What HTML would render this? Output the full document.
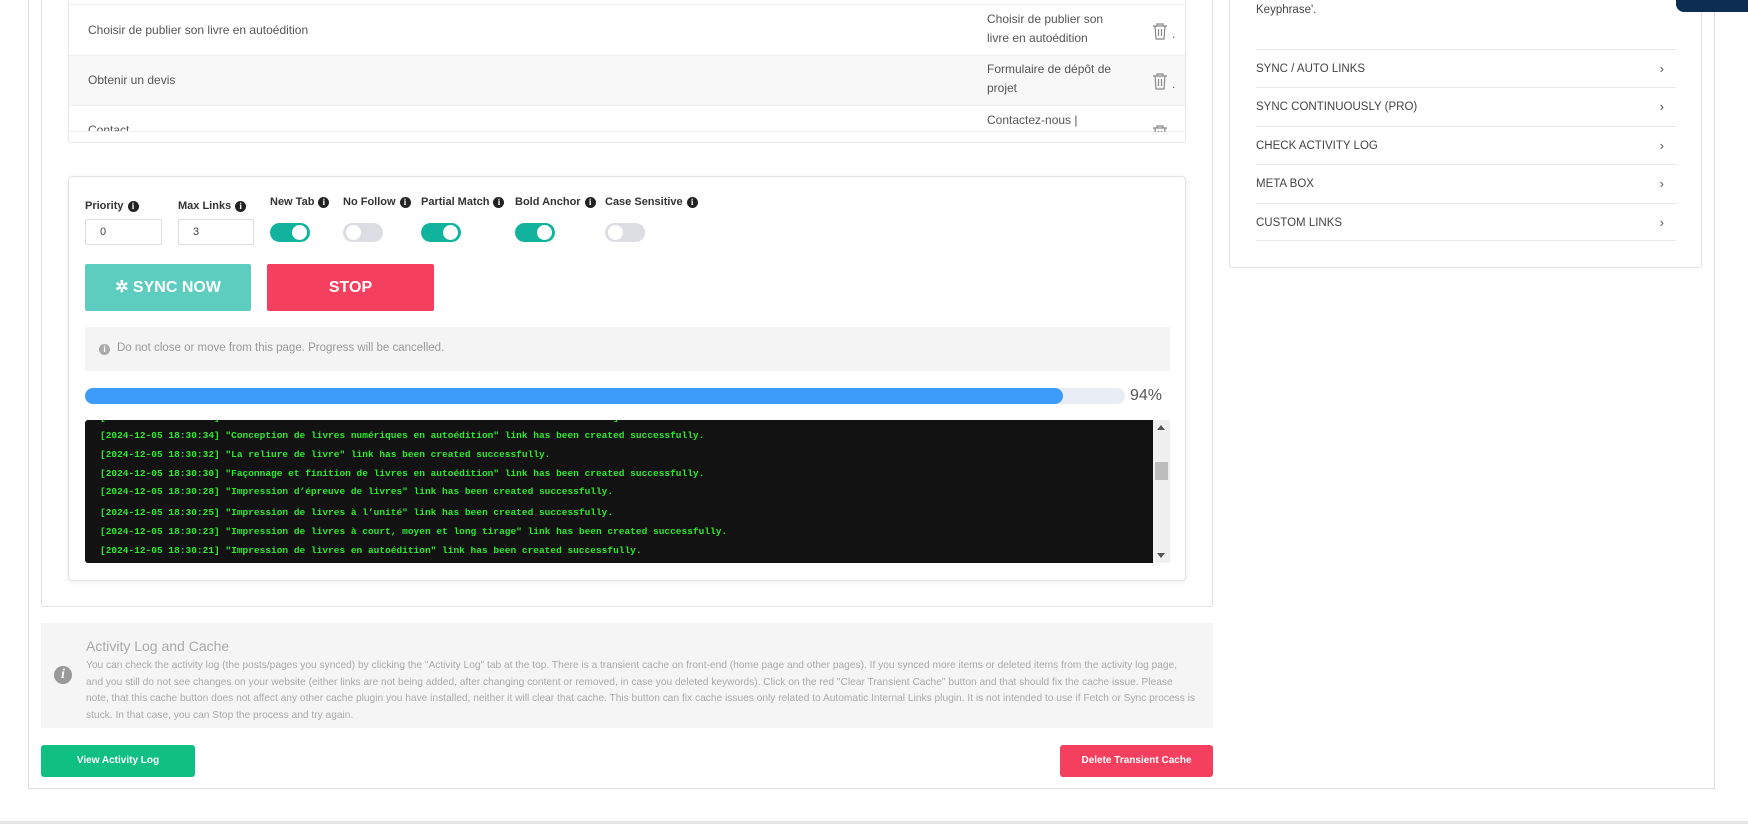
<!DOCTYPE html>
<html><head><meta charset="utf-8"><style>
*{box-sizing:border-box;margin:0;padding:0}
body{width:1748px;height:824px;background:#fff;position:relative;overflow:hidden;font-family:"Liberation Sans",sans-serif;color:#444}
.a{position:absolute}
.lbl{font-size:11px;font-weight:bold;color:#333;display:flex;align-items:center;gap:4px}
.i{width:11px;height:11px;border-radius:50%;background:#222;color:#fff;font-size:9px;line-height:11px;text-align:center;font-weight:bold;font-family:"Liberation Serif",serif}
.inp{border:1px solid #ddd;border-radius:2px;font-size:11px;padding-left:14px;line-height:25px;color:#444}
.tg{width:40px;height:19px;border-radius:10px}
.tg.on{background:#12b39d}.tg.off{background:#dcdde3}
.tg::after{content:"";position:absolute;top:2px;width:15px;height:15px;border-radius:50%;background:#fff}
.tg.on::after{right:3px}.tg.off::after{left:3px}
.log{font-family:"Liberation Mono",monospace;font-size:9.5px;font-weight:bold;color:#2fe82f;white-space:pre;left:100px}
.sb{left:1256px;width:420px;font-size:11.5px;color:#444;border-top:1px solid #e8e8e8;height:38px;line-height:38px}
.sb span{position:absolute;right:12px;color:#555;font-size:13px}
.row{left:69px;width:1116px;font-size:12px;color:#555}
</style></head><body>
<div class="a" style="left:28px;top:-2px;width:1687px;height:791px;border:1px solid #ddd;border-top:none"></div>
<div class="a" style="left:0;top:821px;width:1748px;height:3px;background:#e6e6e6"></div>
<div class="a" style="left:41px;top:-2px;width:1172px;height:609px;border:1px solid #e2e2e2;border-radius:3px;border-top:none"></div>
<div class="a" style="left:68px;top:-2px;width:1118px;height:145px;border:1px solid #e6e6e6;border-radius:3px;border-top:none"></div>
<div class="a row" style="top:4px;height:51px;border-top:1px solid #eee;"></div>
<div class="a row" style="top:55px;height:50px;border-top:1px solid #eee;background:#f8f8f8"></div>
<div class="a row" style="top:105px;height:27px;border-top:1px solid #eee;border-bottom:1px solid #eee;"></div>
<div class="a" style="left:88px;top:23px;font-size:12px;color:#555">Choisir de publier son livre en autoédition</div>
<div class="a" style="left:88px;top:73px;font-size:12px;color:#555">Obtenir un devis</div>
<div class="a" style="left:88px;top:123px;height:8px;overflow:hidden;font-size:12px;color:#555">Contact</div>
<div class="a" style="left:987px;top:10px;font-size:12px;color:#555;line-height:19px;width:140px">Choisir de publier son<br>livre en autoédition</div>
<div class="a" style="left:987px;top:60px;font-size:12px;color:#555;line-height:19px;width:140px">Formulaire de dépôt de<br>projet</div>
<div class="a" style="left:987px;top:111px;font-size:12px;color:#555;line-height:19px;height:20px;overflow:hidden">Contactez-nous |</div>
<svg class="a" style="left:1152px;top:22px" width="16" height="18" viewBox="0 0 16 18" fill="none" stroke="#888" stroke-width="1.2"><path d="M1 4h14M5 4V2h6v2M3 4l1 13h8l1-13M6.5 7v7M9.5 7v7"/></svg>
<svg class="a" style="left:1152px;top:72px" width="16" height="18" viewBox="0 0 16 18" fill="none" stroke="#888" stroke-width="1.2"><path d="M1 4h14M5 4V2h6v2M3 4l1 13h8l1-13M6.5 7v7M9.5 7v7"/></svg>
<div class="a" style="left:1152px;top:124px;height:8px;overflow:hidden"><svg width="16" height="18" viewBox="0 0 16 18" fill="none" stroke="#888" stroke-width="1.2"><path d="M1 4h14M5 4V2h6v2M3 4l1 13h8l1-13M6.5 7v7M9.5 7v7"/></svg></div>
<div class="a" style="left:1172px;top:27px;font-size:12px;color:#555">.</div>
<div class="a" style="left:1172px;top:77px;font-size:12px;color:#555">.</div>
<div class="a" style="left:68px;top:176px;width:1118px;height:405px;border:1px solid #e4e4e4;border-radius:4px;box-shadow:0 1px 6px rgba(0,0,0,.08)"></div>
<div class="a lbl" style="left:85px;top:200px">Priority <span class="i">i</span></div>
<div class="a lbl" style="left:178px;top:200px">Max Links <span class="i">i</span></div>
<div class="a lbl" style="left:270px;top:196px">New Tab <span class="i">i</span></div>
<div class="a lbl" style="left:343px;top:196px">No Follow <span class="i">i</span></div>
<div class="a lbl" style="left:421px;top:196px">Partial Match <span class="i">i</span></div>
<div class="a lbl" style="left:515px;top:196px">Bold Anchor <span class="i">i</span></div>
<div class="a lbl" style="left:605px;top:196px">Case Sensitive <span class="i">i</span></div>
<div class="a inp" style="left:85px;top:219px;width:77px;height:26px">0</div>
<div class="a inp" style="left:178px;top:219px;width:76px;height:26px">3</div>
<div class="a tg on" style="left:270px;top:223px"></div>
<div class="a tg off" style="left:343px;top:223px"></div>
<div class="a tg on" style="left:421px;top:223px"></div>
<div class="a tg on" style="left:515px;top:223px"></div>
<div class="a tg off" style="left:605px;top:223px"></div>
<div class="a" style="left:85px;top:264px;width:166px;height:47px;background:#5ccdbf;border-radius:2px;color:#fff;font-weight:bold;font-size:16px;line-height:47px;text-align:center">✲ SYNC NOW</div>
<div class="a" style="left:267px;top:264px;width:167px;height:47px;background:#f43f5e;border-radius:2px;color:#fff;font-weight:bold;font-size:16px;line-height:47px;text-align:center">STOP</div>
<div class="a" style="left:85px;top:327px;width:1085px;height:44px;background:#f4f4f4"></div>
<div class="a" style="left:99px;top:344px;width:11px;height:11px;border-radius:50%;background:#aaa;color:#fff;font-size:9px;line-height:11px;text-align:center;font-weight:bold">i</div>
<div class="a" style="left:117px;top:342px;font-size:11.5px;color:#999">Do not close or move from this page. Progress will be cancelled.</div>
<div class="a" style="left:85px;top:388px;width:1040px;height:16px;background:#e9edf5;border-radius:8px"></div>
<div class="a" style="left:85px;top:388px;width:978px;height:16px;background:#3d9bfa;border-radius:8px"></div>
<div class="a" style="left:1130px;top:387px;font-size:16px;color:#555">94%</div>
<div class="a" style="left:85px;top:420px;width:1068px;height:143px;background:#121212;border-radius:3px 0 0 3px;overflow:hidden">
<div class="a log" style="left:15px;top:-8px">[2024-12-05 18:30:36]                                                                     ]</div>
<div class="a log" style="left:15px;top:10px">[2024-12-05 18:30:34] "Conception de livres numériques en autoédition" link has been created successfully.</div>
<div class="a log" style="left:15px;top:29px">[2024-12-05 18:30:32] "La reliure de livre" link has been created successfully.</div>
<div class="a log" style="left:15px;top:48px">[2024-12-05 18:30:30] "Façonnage et finition de livres en autoédition" link has been created successfully.</div>
<div class="a log" style="left:15px;top:66px">[2024-12-05 18:30:28] "Impression d’épreuve de livres" link has been created successfully.</div>
<div class="a log" style="left:15px;top:87px">[2024-12-05 18:30:25] "Impression de livres à l’unité" link has been created successfully.</div>
<div class="a log" style="left:15px;top:106px">[2024-12-05 18:30:23] "Impression de livres à court, moyen et long tirage" link has been created successfully.</div>
<div class="a log" style="left:15px;top:125px">[2024-12-05 18:30:21] "Impression de livres en autoédition" link has been created successfully.</div>
</div>
<div class="a" style="left:1153px;top:420px;width:17px;height:143px;background:#f0f0f0"></div>
<div class="a" style="left:1155px;top:462px;width:13px;height:18px;background:#bdbdbd"></div>
<div class="a" style="left:1157px;top:425px;width:0;height:0;border:4px solid transparent;border-bottom:5px solid #555;border-top:none"></div>
<div class="a" style="left:1157px;top:553px;width:0;height:0;border:4px solid transparent;border-top:5px solid #555;border-bottom:none"></div>
<div class="a" style="left:41px;top:623px;width:1172px;height:105px;background:#f5f5f5"></div>
<div class="a" style="left:54px;top:666px;width:18px;height:18px;border-radius:50%;background:#999;color:#fff;font-family:'Liberation Serif',serif;font-style:italic;font-weight:bold;font-size:14px;line-height:18px;text-align:center">i</div>
<div class="a" style="left:86px;top:638px;font-size:14px;color:#aaa">Activity Log and Cache</div>
<div class="a" style="left:86px;top:658px;width:1110px;font-size:10.2px;line-height:16.5px;color:#aaa">You can check the activity log (the posts/pages you synced) by clicking the "Activity Log" tab at the top. There is a transient cache on front-end (home page and other pages). If you synced more items or deleted items from the activity log page, and you still do not see changes on your website (either links are not being added, after changing content or removed, in case you deleted keywords). Click on the red "Clear Transient Cache" button and that should fix the cache issue. Please note, that this cache button does not affect any other cache plugin you have installed, neither it will clear that cache. This button can fix cache issues only related to Automatic Internal Links plugin. It is not intended to use if Fetch or Sync process is stuck. In that case, you can Stop the process and try again.</div>
<div class="a" style="left:41px;top:745px;width:154px;height:32px;background:#10bf82;border-radius:3px;color:#fff;font-size:10px;font-weight:bold;line-height:32px;text-align:center">View Activity Log</div>
<div class="a" style="left:1060px;top:745px;width:153px;height:32px;background:#f43f5e;border-radius:3px;color:#fff;font-size:10px;font-weight:bold;line-height:32px;text-align:center">Delete Transient Cache</div>
<div class="a" style="left:1229px;top:-2px;width:473px;height:270px;border:1px solid #e2e2e2;border-top:none;border-radius:3px"></div>
<div class="a" style="left:1256px;top:4px;font-size:11.5px;color:#444">Keyphrase'.</div>
<div class="a sb" style="top:49px">SYNC / AUTO LINKS<span>›</span></div>
<div class="a sb" style="top:87px">SYNC CONTINUOUSLY (PRO)<span>›</span></div>
<div class="a sb" style="top:126px">CHECK ACTIVITY LOG<span>›</span></div>
<div class="a sb" style="top:164px">META BOX<span>›</span></div>
<div class="a sb" style="top:203px;border-bottom:1px solid #e8e8e8">CUSTOM LINKS<span>›</span></div>
<div class="a" style="left:1676px;top:0;width:72px;height:12px;background:#0d2d52;border-radius:0 0 0 8px"></div>
</body></html>
